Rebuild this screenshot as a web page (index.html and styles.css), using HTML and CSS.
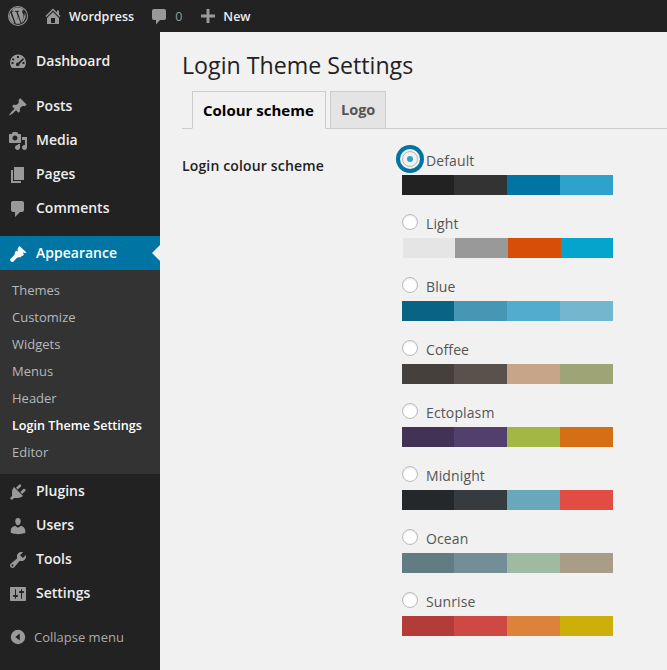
FILE: index.html
```html
<!DOCTYPE html>
<html lang="en">
<head>
    <meta charset="UTF-8">
    <meta name="viewport" content="width=device-width, initial-scale=1.0">
    <title>Login Theme Settings</title>
    <link rel="stylesheet" href="styles.css">
</head>
<body>
    <div class="topbar">
        <svg class="wp-logo" viewBox="0 0 20 20"><path fill-rule="evenodd" d="M10 0a10 10 0 1 0 0 20a10 10 0 0 0 0-20zm0 1a9 9 0 1 1 0 18a9 9 0 0 1 0-18zM2.200 6.300L6.500 17.700A8.500 8.500 0 0 1 2.200 6.300zM3 5.200A8.500 8.500 0 0 1 15.900 3.900c-1.400-.1-2.300 1.400-1.400 2.800c.5.900 1 1.900 1 3.300c0 1-.4 2.200-.9 3.700l-1.100 3.500l-3.900-11.400h1.200c.7-.1.600-1 0-1c-1.200.1-2.400.1-3.600 0c-.6 0-.7 1-.1 1h1.100l1.700 4.600l-2.300 6.900l-3.900-11.500h1.300c.7-.1.600-1 0-1c-1.100.1-2.200.1-3.200.1zM10.200 10.800l2.400 6.600a8.500 8.500 0 0 1-5.200.1zM16.600 5.800a8.500 8.500 0 0 1-2.700 11l2.300-6.900c.5-1.300.7-2.300.6-4.100z"/></svg>
        <span class="top-item strong">
            <svg class="top-icon" viewBox="0 0 20 20"><path fill-rule="evenodd" d="M16 8.500l1.530 1.530-1.060 1.060L10 4.620l-6.470 6.470-1.060-1.060L10 2.500l4 4v-2h2v4zm-6-2.460l6 5.990V18H4v-6.020zM12 17v-5H8v5h4z"/></svg>
            Wordpress
        </span>
        <span class="top-item muted">
            <svg class="top-icon" viewBox="0 0 20 20"><path d="M5 3h10a2 2 0 0 1 2 2v7a2 2 0 0 1-2 2h-4l-4 4.500V14H5a2 2 0 0 1-2-2V5a2 2 0 0 1 2-2z"/></svg>
            0
        </span>
        <span class="top-item strong">
            <svg class="top-icon" viewBox="0 0 20 20"><path d="M8.500 3h3v5.500H17v3h-5.500V17h-3v-5.500H3v-3h5.500z"/></svg>
            New
        </span>
    </div>

    <div class="layout">
        <nav class="sidebar">
            <a class="menu-item first">
                <svg class="menu-icon" viewBox="0 0 20 20"><path fill-rule="evenodd" d="M10 2.500a8 8 0 0 0-8 8c0 2 .7 3.800 2 5.500h12c1.300-1.700 2-3.500 2-5.500a8 8 0 0 0-8-8zM9 4h2v2H9zM5 6l1.500 1.400l-1.300 1.300L3.800 7.300zM15 6l1 1.300l-4.500 4.700a1.800 1.800 0 1 1-1.300-1.300zM3.500 10h2v2h-2zM14.500 10h2v2h-2z"/></svg>
                Dashboard
            </a>
            <a class="menu-item spaced">
                <svg class="menu-icon" viewBox="0 0 20 20"><path d="M10.440 3.020l1.820-1.820 6.360 6.350-1.830 1.820c-1.050-.68-2.480-.57-3.410.36l-.75.75c-.92.93-1.040 2.350-.35 3.410l-1.830 1.820-2.410-2.410-2.800 2.790c-.42.42-3.380 2.710-3.800 2.290s1.860-3.390 2.280-3.810l2.790-2.790L4.100 9.360l1.830-1.820c1.050.69 2.480.57 3.400-.36l.75-.75c.93-.92 1.050-2.350.36-3.410z"/></svg>
                Posts
            </a>
            <a class="menu-item">
                <svg class="menu-icon" viewBox="0 0 20 20"><path fill-rule="evenodd" d="M13 11V4c0-.55-.45-1-1-1h-1.670L9 1H5L3.670 3H2c-.55 0-1 .45-1 1v7c0 .55.45 1 1 1h10c.55 0 1-.45 1-1zM7 4.500c1.380 0 2.500 1.120 2.500 2.500S8.380 9.500 7 9.500 4.500 8.380 4.500 7 5.620 4.500 7 4.500zM14 6h5v10.500c0 1.380-1.120 2.500-2.500 2.500S14 17.880 14 16.500s1.120-2.500 2.500-2.500c.17 0 .34.020.5.050V9h-3V6zm-4 8.050V13h2v3.500c0 1.380-1.120 2.500-2.500 2.500S7 17.880 7 16.500 8.120 14 9.500 14c.17 0 .34.020.5.050z"/></svg>
                Media
            </a>
            <a class="menu-item">
                <svg class="menu-icon" viewBox="0 0 20 20"><path d="M6 15V2h10v13H6zm-1 1h8v2H3V5h2v11z"/></svg>
                Pages
            </a>
            <a class="menu-item">
                <svg class="menu-icon" viewBox="0 0 20 20"><path d="M5 2h9c1.100 0 2 .9 2 2v7c0 1.100-.9 2-2 2h-2l-5 5v-5H5c-1.100 0-2-.9-2-2V4c0-1.100.9-2 2-2z"/></svg>
                Comments
            </a>
            <a class="menu-item current">
                <svg class="menu-icon" viewBox="0 0 20 20"><path d="M11.500 2l7 6.500l-2 .8l-1.800-1.300l1.200 2.800l-1.500 1.200l-4.400-4.300l-.5-3zM8.800 6.500l5.200 5.200l-1.800 1.800c-1.500-.4-2.600-.2-3.600.8l-3.600 3.600c-.9.900-3.800-1.700-2.700-2.900l3.500-3.500c1-1 1.400-2.200 1-3.500z"/></svg>
                Appearance
            </a>
            <div class="submenu">
                <a>Themes</a>
                <a>Customize</a>
                <a>Widgets</a>
                <a>Menus</a>
                <a>Header</a>
                <a class="active">Login Theme Settings</a>
                <a>Editor</a>
            </div>
            <a class="menu-item">
                <svg class="menu-icon" viewBox="0 0 20 20"><path d="M13.110 4.360L9.870 7.600 8 5.730l3.240-3.240c.35-.34 1.050-.2 1.560.32.520.51.660 1.210.310 1.550zm-8 1.770l.91-1.120 9.010 9.010-1.190.840c-.71.710-2.630 1.160-3.820 1.160H6.140L4.900 17.260c-.590.590-1.540.590-2.120 0-.590-.580-.590-1.530 0-2.120l1.240-1.240v-3.880c0-1.130.46-3.050 1.090-3.890zm7.260 3.970l3.240-3.240c.34-.35 1.040-.21 1.550.31.520.510.660 1.210.310 1.550l-3.240 3.250z"/></svg>
                Plugins
            </a>
            <a class="menu-item">
                <svg class="menu-icon" viewBox="0 0 20 20"><path d="M10 9.250c-2.270 0-2.730-3.440-2.730-3.440C7 4.020 7.820 2 9.970 2c2.160 0 2.980 2.020 2.710 3.810 0 0-.41 3.440-2.680 3.440zm0 2.570L12.720 10c2.390 0 4.520 2.330 4.520 4.530v2.490s-3.650 1.130-7.240 1.130c-3.650 0-7.240-1.130-7.240-1.130v-2.490c0-2.250 1.940-4.480 4.470-4.480z"/></svg>
                Users
            </a>
            <a class="menu-item">
                <svg class="menu-icon" viewBox="0 0 20 20"><path fill-rule="evenodd" d="M16.680 9.770c-1.340 1.340-3.300 1.670-4.950.99l-5.410 6.520c-.99.990-2.590.990-3.570 0-.990-.980-.990-2.580 0-3.570l6.520-5.420c-.68-1.650-.35-3.610.99-4.950 1.280-1.280 3.120-1.620 4.720-1.060l-2.890 2.890 2.820 2.820 2.860-2.870c.53 1.580.18 3.440-1.090 4.650zM3.810 16.210c.4.390 1.040.39 1.430 0 .4-.4.400-1.040 0-1.430-.390-.4-1.030-.4-1.430 0-.39.390-.39 1.030 0 1.430z"/></svg>
                Tools
            </a>
            <a class="menu-item">
                <svg class="menu-icon" viewBox="0 0 20 20"><path fill-rule="evenodd" d="M18 16V4c0-.55-.45-1-1-1H3c-.55 0-1 .45-1 1v12c0 .55.45 1 1 1h14c.55 0 1-.45 1-1zM8 11h1c.55 0 1 .45 1 1s-.45 1-1 1H8v1.500c0 .28-.22.5-.5.5s-.5-.22-.5-.5V13H6c-.55 0-1-.45-1-1s.45-1 1-1h1V5.500c0-.28.22-.5.5-.5s.5.22.5.5V11zm5-2h-1c-.55 0-1-.45-1-1s.45-1 1-1h1V5.500c0-.28.22-.5.5-.5s.5.22.5.5V7h1c.55 0 1 .45 1 1s-.45 1-1 1h-1v5.500c0 .28-.22.5-.5.5s-.5-.22-.5-.5V9z"/></svg>
                Settings
            </a>
            <a class="collapse">
                <svg class="collapse-icon" viewBox="0 0 20 20"><path fill-rule="evenodd" d="M10 2a8 8 0 1 1 0 16a8 8 0 0 1 0-16zM12 6L7 10l5 4z"/></svg>
                Collapse menu
            </a>
        </nav>

        <main class="content">
            <h1>Login Theme Settings</h1>
            <div class="tabs">
                <a class="tab selected">Colour scheme</a>
                <a class="tab">Logo</a>
            </div>
            <div class="form-row">
                <div class="form-label">Login colour scheme</div>
                <div class="schemes">
                    <label class="scheme">
                        <span class="scheme-name"><span class="radio checked"></span>Default</span>
                        <span class="swatches"><i class="c-222"></i><i class="c-333"></i><i class="c-0074a2"></i><i class="c-2ea2cc"></i></span>
                    </label>
                    <label class="scheme">
                        <span class="scheme-name"><span class="radio"></span>Light</span>
                        <span class="swatches inset"><i class="c-e5"></i><i class="c-999"></i><i class="c-d64e07"></i><i class="c-04a4cc"></i></span>
                    </label>
                    <label class="scheme">
                        <span class="scheme-name"><span class="radio"></span>Blue</span>
                        <span class="swatches"><i class="c-096484"></i><i class="c-4796b3"></i><i class="c-52accc"></i><i class="c-74b6ce"></i></span>
                    </label>
                    <label class="scheme">
                        <span class="scheme-name"><span class="radio"></span>Coffee</span>
                        <span class="swatches"><i class="c-46403c"></i><i class="c-59524c"></i><i class="c-c7a589"></i><i class="c-9ea476"></i></span>
                    </label>
                    <label class="scheme">
                        <span class="scheme-name"><span class="radio"></span>Ectoplasm</span>
                        <span class="swatches"><i class="c-413256"></i><i class="c-523f6d"></i><i class="c-a3b745"></i><i class="c-d46f15"></i></span>
                    </label>
                    <label class="scheme">
                        <span class="scheme-name"><span class="radio"></span>Midnight</span>
                        <span class="swatches"><i class="c-25282b"></i><i class="c-363b3f"></i><i class="c-69a8bb"></i><i class="c-e14d43"></i></span>
                    </label>
                    <label class="scheme">
                        <span class="scheme-name"><span class="radio"></span>Ocean</span>
                        <span class="swatches"><i class="c-627c83"></i><i class="c-738e96"></i><i class="c-9ebaa0"></i><i class="c-aa9d88"></i></span>
                    </label>
                    <label class="scheme">
                        <span class="scheme-name"><span class="radio"></span>Sunrise</span>
                        <span class="swatches"><i class="c-b43c38"></i><i class="c-cf4944"></i><i class="c-dd823b"></i><i class="c-ccaf0b"></i></span>
                    </label>
                </div>
            </div>
        </main>
    </div>
</body>
</html>
```

FILE: styles.css
```css
* {
    box-sizing: border-box;
}

html, body {
    height: 100%;
}

body {
    margin: 0;
    font-family: "Open Sans", sans-serif;
    font-size: 14px;
    color: #444;
    background-color: #f1f1f1;
    overflow: hidden;
}

/* top bar */
.topbar {
    height: 32px;
    background-color: #222;
    display: flex;
    align-items: center;
    font-size: 12.5px;
}

.wp-logo {
    width: 20px;
    height: 20px;
    margin-left: 8px;
    fill: #999;
}

.top-item {
    display: flex;
    align-items: center;
}

.top-icon {
    width: 20px;
    height: 20px;
    fill: #999;
}

.top-item.strong {
    color: #eee;
    font-weight: 600;
}

.top-item.muted {
    color: #999;
}

.top-item:nth-of-type(1) {
    margin-left: 15px;
    gap: 6px;
}

.top-item:nth-of-type(2) {
    margin-left: 15px;
    gap: 6px;
}

.top-item:nth-of-type(3) {
    margin-left: 16px;
    gap: 5px;
}

.layout {
    display: flex;
    height: 638px;
}

/* left menu */
.sidebar {
    width: 160px;
    flex-shrink: 0;
    background-color: #222;
    padding-top: 12px;
}

.menu-item {
    position: relative;
    display: flex;
    align-items: center;
    height: 34px;
    padding-left: 8px;
    padding-bottom: 2px;
    gap: 8px;
    color: #eee;
    font-size: 14px;
    font-weight: 600;
}

.menu-item.spaced {
    margin-top: 11px;
}

.menu-icon {
    width: 20px;
    height: 20px;
    margin-bottom: -4px;
    fill: #999;
    flex-shrink: 0;
}

.menu-item.current {
    background-color: #0074a2;
    color: #fff;
    margin-top: 11px;
}

.menu-item.current .menu-icon {
    fill: #fff;
}

.menu-item.current::after {
    content: "";
    position: absolute;
    right: 0;
    top: 9px;
    border: 8px solid transparent;
    border-right-color: #f1f1f1;
    border-left-width: 0;
}

.submenu {
    background-color: #333;
    padding: 7px 0;
    height: 204px;
}

.submenu a {
    display: block;
    height: 27px;
    line-height: 26px;
    padding-left: 12px;
    font-size: 13px;
    color: #b4b9be;
}

.submenu a.active {
    color: #fff;
    font-size: 12.6px;
    line-height: 28px;
    font-weight: 600;
}

.collapse {
    display: flex;
    align-items: center;
    gap: 7px;
    height: 34px;
    margin-top: 10px;
    padding-left: 9px;
    font-size: 13px;
    color: #aaa;
}

.collapse-icon {
    width: 18px;
    height: 18px;
    fill: #999;
    flex-shrink: 0;
}

/* main area */
.content {
    flex: 1;
    padding-left: 22px;
    min-width: 0;
}

h1 {
    margin: 0;
    padding-top: 17px;
    height: 59px;
    font-size: 23.2px;
    line-height: 33px;
    font-weight: 400;
    color: #222;
}

.tabs {
    display: flex;
    height: 38px;
    padding-left: 10px;
    gap: 4px;
    border-bottom: 1px solid #ccc;
}

.tab {
    height: 38px;
    width: 56px;
    padding: 0 10px;
    line-height: 36px;
    font-size: 14.5px;
    font-weight: 700;
    color: #555;
    background-color: #e4e4e4;
    border: 1px solid #ccc;
}

.tab.selected {
    width: 134px;
    font-size: 15px;
    color: #000;
    background-color: #f1f1f1;
    border-bottom-color: #f1f1f1;
}

.form-row {
    display: flex;
    padding-top: 20px;
}

.form-label {
    width: 220px;
    padding-top: 9px;
    font-weight: 600;
    letter-spacing: 0.15px;
    color: #222;
    line-height: 16px;
}

.scheme {
    display: block;
    height: 63px;
}

.scheme-name {
    display: flex;
    align-items: center;
    height: 24px;
    line-height: 24px;
    letter-spacing: 0.12px;
    color: #555;
}

.radio {
    width: 16px;
    height: 16px;
    margin-right: 8px;
    border-radius: 50%;
    border: 1px solid #bbb;
    background-color: #fff;
    box-shadow: inset 0 1px 2px rgba(0, 0, 0, 0.1);
    position: relative;
    top: -2px;
}

.radio.checked {
    box-shadow: 0 0 0 2px #f1f1f1, 0 0 0 6px #0074a2;
    background-color: #f1f1f1;
}

.radio.checked::before {
    content: "";
    display: block;
    width: 6px;
    height: 6px;
    margin: 4px;
    border-radius: 50%;
    background-color: #2ea2cc;
}

.swatches {
    display: grid;
    grid-template-columns: 52px 53px 53px 53px;
    width: 211px;
    height: 20px;
    margin-top: 2px;
}

.swatches.inset {
    width: 210px;
    margin-left: 1px;
    grid-template-columns: 52px 53px 53px 52px;
}

.c-222 { background-color: #222; }
.c-333 { background-color: #333; }
.c-0074a2 { background-color: #0074a2; }
.c-2ea2cc { background-color: #2ea2cc; }
.c-e5 { background-color: #e5e5e5; }
.c-999 { background-color: #999; }
.c-d64e07 { background-color: #d64e07; }
.c-04a4cc { background-color: #04a4cc; }
.c-096484 { background-color: #096484; }
.c-4796b3 { background-color: #4796b3; }
.c-52accc { background-color: #52accc; }
.c-74b6ce { background-color: #74b6ce; }
.c-46403c { background-color: #46403c; }
.c-59524c { background-color: #59524c; }
.c-c7a589 { background-color: #c7a589; }
.c-9ea476 { background-color: #9ea476; }
.c-413256 { background-color: #413256; }
.c-523f6d { background-color: #523f6d; }
.c-a3b745 { background-color: #a3b745; }
.c-d46f15 { background-color: #d46f15; }
.c-25282b { background-color: #25282b; }
.c-363b3f { background-color: #363b3f; }
.c-69a8bb { background-color: #69a8bb; }
.c-e14d43 { background-color: #e14d43; }
.c-627c83 { background-color: #627c83; }
.c-738e96 { background-color: #738e96; }
.c-9ebaa0 { background-color: #9ebaa0; }
.c-aa9d88 { background-color: #aa9d88; }
.c-b43c38 { background-color: #b43c38; }
.c-cf4944 { background-color: #cf4944; }
.c-dd823b { background-color: #dd823b; }
.c-ccaf0b { background-color: #ccaf0b; }
```
